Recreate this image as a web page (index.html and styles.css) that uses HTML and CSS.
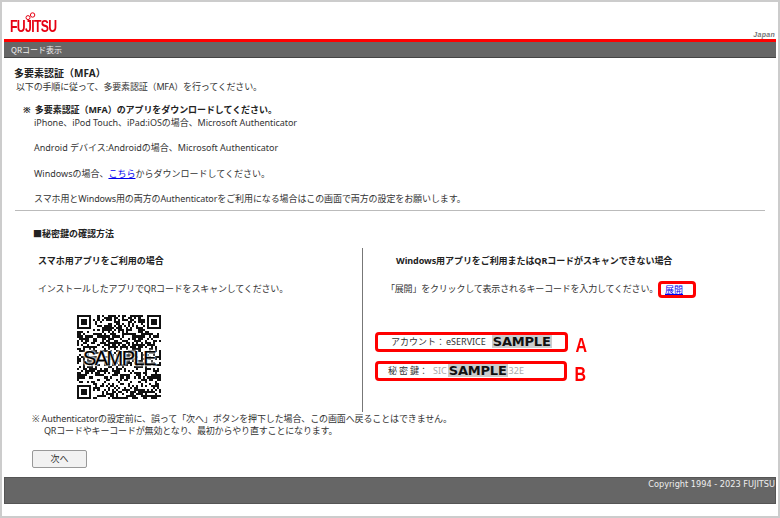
FILE: index.html
```html
<!DOCTYPE html>
<html lang="ja">
<head>
<meta charset="utf-8">
<title>QRコード表示</title>
<link rel="stylesheet" href="styles.css">
</head>
<body>
<div class="frame">
  <header class="head">
    <div class="logo">
      <svg class="logo-loops" width="14" height="9" viewBox="0 0 14 9"><circle cx="4" cy="5.6" r="2" fill="none" stroke="#e60012" stroke-width="1"/><circle cx="8.6" cy="3" r="2.2" fill="none" stroke="#e60012" stroke-width="1"/></svg>
      <span class="logo-text">FUJITSU</span>
    </div>
    <span class="japan">Japan</span>
  </header>
  <div class="bar">QRコード表示</div>
  <main class="main">
    <h1 class="title">多要素認証（MFA）</h1>
    <p class="intro">以下の手順に従って、多要素認証（MFA）を行ってください。</p>
    <section class="dl">
      <p class="dl-head">※ 多要素認証（MFA）のアプリをダウンロードしてください。</p>
      <p class="dl-line first">iPhone、iPod Touch、iPad:iOSの場合、Microsoft Authenticator</p>
      <p class="dl-line">Android デバイス:Androidの場合、Microsoft Authenticator</p>
      <p class="dl-line">Windowsの場合、<a class="link" href="#">こちら</a>からダウンロードしてください。</p>
      <p class="dl-line last">スマホ用とWindows用の両方のAuthenticatorをご利用になる場合はこの画面で両方の設定をお願いします。</p>
    </section>
    <hr class="rule">
    <h2 class="sub">■秘密鍵の確認方法</h2>
    <div class="cols">
      <div class="col-l">
        <h3 class="col-title">スマホ用アプリをご利用の場合</h3>
        <p class="col-text">インストールしたアプリでQRコードをスキャンしてください。</p>
        <div class="qr">
          <svg id="qr" class="qr-svg" width="84" height="84" viewBox="0 0 41 41" shape-rendering="crispEdges"></svg>
          <span class="qr-sample">SAMPLE</span>
        </div>
      </div>
      <div class="col-r">
        <h3 class="col-title-r">Windows用アプリをご利用またはQRコードがスキャンできない場合</h3>
        <p class="col-text-r">「展開」をクリックして表示されるキーコードを入力してください。<span class="mark"><a class="link" href="#">展開</a></span></p>
        <div class="key-row acc">
          <div class="key-box box-a"><span class="key-label">アカウント：</span><span class="key-val">eSERVICE</span><span class="sample">SAMPLE</span></div>
          <span class="letter">A</span>
        </div>
        <div class="key-row sec">
          <div class="key-box box-b"><span class="key-label">秘 密 鍵：</span><span class="key-dim">SIC</span><span class="sample tight">SAMPLE</span><span class="key-dim">32E</span></div>
          <span class="letter">B</span>
        </div>
      </div>
    </div>
    <p class="warn">※ Authenticatorの設定前に、誤って「次へ」ボタンを押下した場合、この画面へ戻ることはできません。<br><span class="warn-2">QRコードやキーコードが無効となり、最初からやり直すことになります。</span></p>
    <button class="next" type="button">次へ</button>
  </main>
  <footer class="foot">Copyright 1994 - 2023 FUJITSU</footer>
</div>
<script src="qr.js"></script>
</body>
</html>
```

FILE: styles.css
```css
* { box-sizing: border-box; }
html, body { margin: 0; padding: 0; background: #fff; }
body { font-family: "Noto Sans", "Noto Sans CJK JP", sans-serif; font-size: 9px; color: #333; }
p, h1, h2, h3 { margin: 0; font-weight: normal; font-size: 9px; }
.frame { width: 780px; height: 518px; border: 2px solid #ccc; padding: 0 2px; display: flex; flex-direction: column; }
.head { height: 37px; position: relative; display: flex; justify-content: space-between; align-items: flex-end; }
.logo { position: relative; margin-left: 6px; margin-bottom: 4px; }
.logo-text { display: block; font-family: "Liberation Sans", sans-serif; font-weight: bold; font-size: 17px; line-height: 16px; color: #e60012; letter-spacing: -0.9px; transform: scaleX(.72); transform-origin: left; width: 50px; }
.logo-loops { position: absolute; left: 14px; top: -7px; }
.japan { font-family: "Liberation Sans", sans-serif; font-style: italic; font-weight: bold; font-size: 7px; line-height: 9px; color: #777; margin-right: 1px; letter-spacing: .3px; }
.bar { height: 19px; border-top: 3px solid #f00; border-bottom: 1px solid #444; background: #666; color: #eee; font-size: 8px; line-height: 15px; padding-left: 7px; font-family: "Noto Sans CJK JP", sans-serif; }
.main { flex: 1; padding: 0; min-height: 0; color: #333; }
.title { font-size: 10px; font-weight: bold; line-height: 14px; margin: 8px 0 0 10px; color: #222; }
.intro { line-height: 14px; margin-left: 12px; letter-spacing: -.17px; }
.dl { margin: 9px 0 0 19px; }
.dl-head { font-weight: bold; line-height: 14px; color: #222; word-spacing: 2px; letter-spacing: -.07px; }
.dl-line { line-height: 14px; margin: 11.25px 0 0 11px; }
.dl-line.first { margin-top: -1px; letter-spacing: -.04px; }
.dl-line.last { letter-spacing: -.1px; }
.link { color: #00e; text-decoration: underline; }
.rule { margin: 3.75px 0 0 11px; width: 750px; border: 0; border-top: 1px solid #bbb; height: 1px; }
.sub { font-weight: bold; line-height: 14px; margin: 16px 0 0 29px; color: #222; }
.cols { display: grid; grid-template-columns: 358px 1fr; margin-top: 7px; height: 164px; }
.col-l { padding-left: 34px; }
.col-title { font-weight: bold; line-height: 14px; margin-top: 6px; color: #222; }
.col-text { line-height: 14px; margin-top: 14px; letter-spacing: -.17px; }
.qr { position: relative; width: 84px; height: 84px; margin: 19px 0 0 39px; }
.qr-svg { display: block; filter: blur(.35px); }
.qr-sample { position: absolute; left: -2px; right: -2px; top: 32px; text-align: center; font-family: "Liberation Sans", sans-serif; font-size: 20px; line-height: 22px; letter-spacing: -1.5px; color: #000; -webkit-text-stroke: .25px #000; text-shadow: 0 0 2px #fff, 0 0 2px #fff, 0 0 3px #fff, 0 0 3px #fff; }
.col-r { border-left: 1px solid #777; padding-left: 1px; }
.col-title-r { font-weight: bold; line-height: 14px; margin: 6px 0 0 32px; color: #222; letter-spacing: -.07px; }
.col-text-r { line-height: 14px; height: 14px; margin: 14px 0 0 22px; white-space: nowrap; letter-spacing: -.2px; }
.mark { display: inline-block; border: 3px solid #f00; border-radius: 4px; width: 38px; height: 17px; line-height: 11px; padding-left: 4px; margin: -6px 0; vertical-align: middle; letter-spacing: 0; }
.key-row { display: flex; align-items: flex-start; margin-left: 11px; }
.acc { margin-top: 36px; }
.sec { margin-top: 9px; }
.key-box { border: 3px solid #f00; border-radius: 4px; height: 20px; display: flex; align-items: center; white-space: nowrap; }
.box-a { width: 193px; padding-left: 13px; }
.box-b { width: 192px; padding-left: 10px; }
.key-label { margin-right: 5px; font-family: "Noto Sans CJK JP", sans-serif; }
.box-a .key-label { margin-right: 1px; }
.key-val { margin-right: 6px; }
.key-dim { color: #aaa; }
.sample { font-family: "DejaVu Sans", sans-serif; font-weight: bold; font-size: 13px; line-height: 13px; color: #111; background: #ccc; padding: 0 1px; letter-spacing: -.2px; }
.sample.tight { margin: 0 1px; }
.letter { font-family: "Liberation Sans", sans-serif; font-weight: bold; font-size: 20px; height: 20px; line-height: 27px; color: #f00; margin-left: 6px; transform: scaleX(.8); }
.warn { line-height: 12.5px; margin: 1px 0 0 28px; letter-spacing: -.13px; }
.warn-2 { margin-left: 12px; letter-spacing: -.17px; }
.next { display: block; width: 55px; height: 18px; margin: 12px 0 0 28px; padding: 0; background: #f2f2f2; border: 1px solid #999; border-radius: 2px; font: 9px "Noto Sans CJK JP", sans-serif; color: #333; }
.foot { height: 27px; background: #666; border: 1px solid #555; color: #eee; font-family: "DejaVu Sans", sans-serif; font-size: 8.2px; line-height: 12px; text-align: right; margin-bottom: 12px; }
```

FILE: qr.js
```js
(function () {
  var svg = document.getElementById('qr');
  var n = 41, seed = 20231;
  function rnd() { seed = (seed * 1103515245 + 12345) & 0x7fffffff; return (seed >> 16) / 32768; }
  function inFinder(x, y, ox, oy) { return x >= ox && x < ox + 8 && y >= oy && y < oy + 8; }
  var d = '';
  function add(x, y, w, h) { d += 'M' + x + ' ' + y + 'h' + w + 'v' + h + 'h' + (-w) + 'z'; }
  for (var y = 0; y < n; y++) {
    for (var x = 0; x < n; x++) {
      if (inFinder(x, y, 0, 0) || inFinder(x, y, 33, 0) || inFinder(x, y, 0, 33)) continue;
      if (rnd() < 0.5) add(x, y, 1, 1);
    }
  }
  [[0, 0], [34, 0], [0, 34]].forEach(function (p) {
    var a = p[0], b = p[1];
    add(a, b, 7, 1); add(a, b + 6, 7, 1); add(a, b + 1, 1, 5); add(a + 6, b + 1, 1, 5); add(a + 2, b + 2, 3, 3);
  });
  var path = document.createElementNS('http://www.w3.org/2000/svg', 'path');
  path.setAttribute('d', d);
  path.setAttribute('fill', '#111');
  svg.appendChild(path);
})();
```
